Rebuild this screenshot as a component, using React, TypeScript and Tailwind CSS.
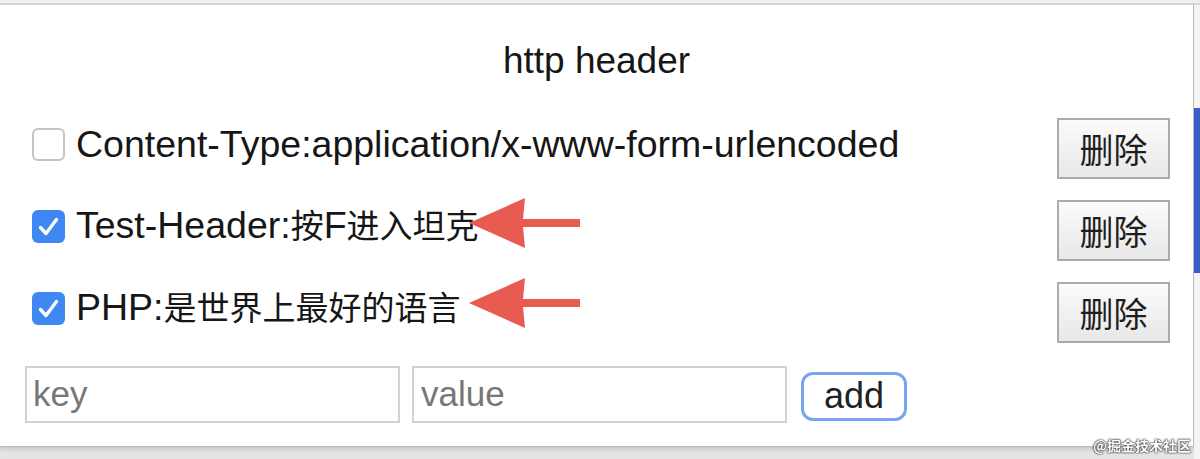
import React from "react";

function Check({ checked }: { checked: boolean }) {
  if (!checked) {
    return <div className="w-[33px] h-[33px] shrink-0 rounded-[6px] border-2 border-[#c4c4c4] bg-white" />;
  }
  return (
    <div className="w-[33px] h-[33px] shrink-0 rounded-[6px] bg-[#3f87f3] relative">
      <svg width="33" height="33" viewBox="0 0 33 33" className="block">
        <path d="M8.5 17.5 L14 23.5 L24.5 9.5" fill="none" stroke="white" strokeWidth="3.4" strokeLinecap="round" strokeLinejoin="round" />
      </svg>
    </div>
  );
}

function Arrow({ className }: { className?: string }) {
  return (
    <svg width="112" height="52" viewBox="0 0 112 52" className={className}>
      <polygon points="0,26 56,1 54,22 111,22 111,30 54,30 56,51" fill="#e85b50" />
    </svg>
  );
}

function DelButton() {
  return (
    <div className="w-[113px] h-[61px] mt-[9px] shrink-0 border-2 border-[#ababab] bg-gradient-to-b from-[#fbfbfb] via-[#f1f1f1] to-[#e8e8e8] flex items-center justify-center text-[34px] text-[#1e1e1e] font-['Noto_Sans_CJK_SC',sans-serif]">
      删除
    </div>
  );
}

export default function App() {
  return (
    <div className="w-[1200px] h-[459px] bg-[#e4e4e4] overflow-hidden relative flex flex-col font-['Liberation_Sans','Noto_Sans_CJK_SC',sans-serif] text-[#161616]">
      <div className="h-[5px] shrink-0 bg-[#efefef] border-b-2 border-[#d6d6d6]" />
      <div className="flex flex-1 min-h-0">
        <div className="w-[1194px] h-[442px] shrink-0 bg-white border-r border-b border-[#bdbdbd] shadow-[0_2px_4px_rgba(0,0,0,0.15)] pt-[36px] pl-[32px] pr-[23px]">
          <div className="h-[40px] leading-[40px] text-[37px] text-center -ml-[32px] -mr-[23px]">http header</div>
          <div className="mt-[22px]">
            <div className="h-[82px] flex items-center">
              <Check checked={false} />
              <div className="ml-[11px] text-[37.5px] leading-[40px] whitespace-nowrap">Content-Type:application/x-www-form-urlencoded</div>
              <div className="flex-1" />
              <DelButton />
            </div>
            <div className="h-[82px] flex items-center">
              <Check checked={true} />
              <div className="ml-[11px] text-[37.5px] leading-[40px] whitespace-nowrap">
                Test-Header:<span className="text-[33px]">按</span>F<span className="text-[33px]">进入坦克</span>
              </div>
              <Arrow className="-ml-[10px] -mt-[6px]" />
              <div className="flex-1" />
              <DelButton />
            </div>
            <div className="h-[82px] flex items-center">
              <Check checked={true} />
              <div className="ml-[11px] text-[37.5px] leading-[40px] whitespace-nowrap">
                PHP:<span className="text-[33px]">是世界上最好的语言</span>
              </div>
              <Arrow className="ml-[8px] -mt-[10px]" />
              <div className="flex-1" />
              <DelButton />
            </div>
          </div>
          <div className="mt-[17px] flex items-center -ml-[7px]">
            <div className="w-[375px] h-[57px] border-2 border-[#d2d2d2] flex items-center pl-[6px] text-[35px] text-[#777]">key</div>
            <div className="w-[375px] h-[57px] ml-[12px] border-2 border-[#d2d2d2] flex items-center pl-[7px] text-[35px] text-[#777]">value</div>
            <div className="w-[106px] h-[49px] ml-[14px] mt-[3px] border-[3px] border-[#78a5ef] rounded-[12px] bg-white flex items-center justify-center text-[36px] text-[#222]">add</div>
          </div>
        </div>
        <div className="flex-1 flex flex-col">
          <div className="h-[103px] bg-[#f4f4f4]" />
          <div className="h-[165px] bg-[#3a5ec6]" />
          <div className="flex-1 bg-[#f4f4f4]" />
        </div>
      </div>
      <div className="absolute right-[9px] bottom-[6px] text-[14px] leading-[15px] font-bold text-white font-['Noto_Sans_CJK_SC',sans-serif] [text-shadow:0_0_1px_#222,0_0_1px_#222,0_0_2px_#444]">
        @掘金技术社区
      </div>
    </div>
  );
}
